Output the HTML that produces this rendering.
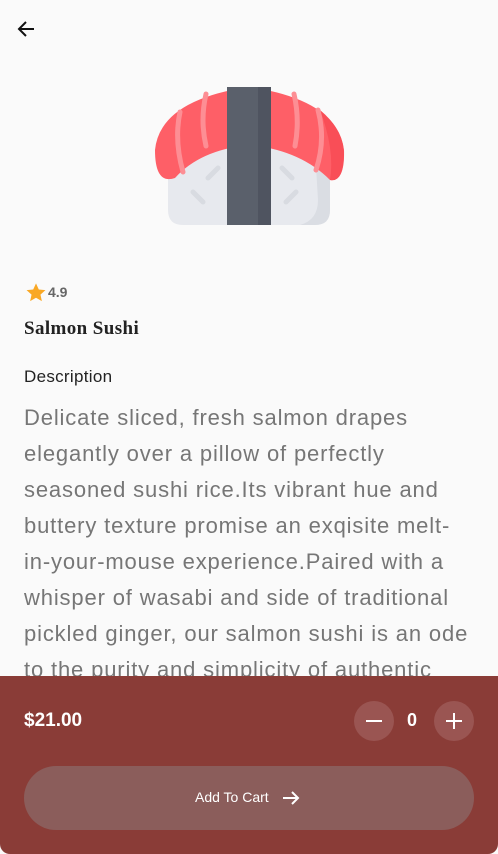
<!DOCTYPE html>
<html><head><meta charset="utf-8"><style>
*{margin:0;padding:0;box-sizing:border-box}
body{width:498px;height:854px;background:#fafafa;font-family:"Liberation Sans",sans-serif;position:relative;overflow:hidden}
.abs{position:absolute}
.desc{left:24px;top:400px;width:450px;font-size:22px;line-height:36px;color:#767676;letter-spacing:0.85px}
.panel{left:0;top:676px;width:498px;height:178px;background:#8a3c37;border-radius:0 0 10px 10px}
.circ{width:40px;height:40px;border-radius:50%;background:#9a5552;top:701px}
</style></head><body>
<svg class="abs" style="left:16px;top:18px" width="22" height="22" viewBox="0 0 22 22"><path d="M18 11H4M10 4L3 11L10 18" stroke="#111" stroke-width="2" fill="none"/></svg>
<svg class="abs" style="left:150px;top:82px" width="200" height="150" viewBox="150 82 200 150">
<path d="M168 160 Q168 145 200 140 L300 140 Q330 145 330 160 L330 210 Q330 225 315 225 L183 225 Q168 225 168 210Z" fill="#e7e9ee"/>
<path d="M315 150 Q330 160 330 180 L330 210 Q330 225 315 225 L300 225 Q318 220 318 200Z" fill="#dadde3"/>
<path d="M155 150 Q160 100 249 87 Q338 100 344 150 Q345 182 330 180 Q300 150 249 145 Q200 150 175 178 Q155 185 155 150Z" fill="#fe5f67"/>
<path d="M320 110 Q344 130 344 155 Q343 183 330 180 Q335 150 320 110Z" fill="#f94e57"/>
<g stroke="#fd8e94" stroke-width="5" fill="none" stroke-linecap="round"><path d="M180 112 Q174 140 183 172"/><path d="M206 94 Q200 120 206 146"/><path d="M294 94 Q300 120 295 146"/><path d="M318 110 Q326 140 316 170"/></g>
<g stroke="#d8dbe1" stroke-width="5" stroke-linecap="round"><path d="M208 178 L218 168"/><path d="M193 192 L203 202"/><path d="M282 168 L292 178"/><path d="M296 192 L286 202"/></g>
<rect x="227" y="87" width="44" height="138" fill="#5a606b"/><rect x="258" y="87" width="13" height="138" fill="#4f5460"/>
</svg>
<svg class="abs" style="left:25px;top:282px" width="22" height="21" viewBox="0 0 24 24"><path d="M12 1.5l3.2 7 7.6.8-5.7 5.1 1.6 7.5L12 18l-6.7 3.9 1.6-7.5L1.2 9.3l7.6-.8z" fill="#f9a825"/></svg>
<div class="abs" style="left:48px;top:284px;font-size:14px;color:#666;font-weight:bold">4.9</div>
<div class="abs" style="left:24px;top:318px;font-family:'Liberation Serif',serif;font-weight:bold;font-size:19px;color:#222;letter-spacing:0.4px">Salmon Sushi</div>
<div class="abs" style="left:24px;top:367px;font-size:17px;color:#222;letter-spacing:0.3px">Description</div>
<div class="abs desc">Delicate sliced, fresh salmon drapes elegantly over a pillow of perfectly seasoned sushi rice.Its vibrant hue and buttery texture promise an exqisite melt-in-your-mouse experience.Paired with a whisper of wasabi and side of traditional pickled ginger, our salmon sushi is an ode to the purity and simplicity of authentic</div>
<div class="abs panel"></div>
<div class="abs" style="left:24px;top:710px;font-size:19px;font-weight:bold;color:#fff">$21.00</div>
<div class="abs circ" style="left:354px"></div>
<div class="abs" style="left:366px;top:720px;width:16px;height:2px;background:#fff"></div>
<div class="abs" style="left:407px;top:710px;font-size:18px;font-weight:bold;color:#fff">0</div>
<div class="abs circ" style="left:434px"></div>
<div class="abs" style="left:446px;top:720px;width:16px;height:2px;background:#fff"></div>
<div class="abs" style="left:453px;top:713px;width:2px;height:16px;background:#fff"></div>
<div class="abs" style="left:24px;top:766px;width:450px;height:64px;border-radius:32px;background:#8b5d5b"></div>
<div class="abs" style="left:195px;top:789px;font-size:14px;color:#fff">Add To Cart</div>
<svg class="abs" style="left:281px;top:788px" width="20" height="20" viewBox="0 0 20 20"><path d="M2 10H17M11 4L17 10L11 16" stroke="#fff" stroke-width="2" fill="none"/></svg>
</body></html>
